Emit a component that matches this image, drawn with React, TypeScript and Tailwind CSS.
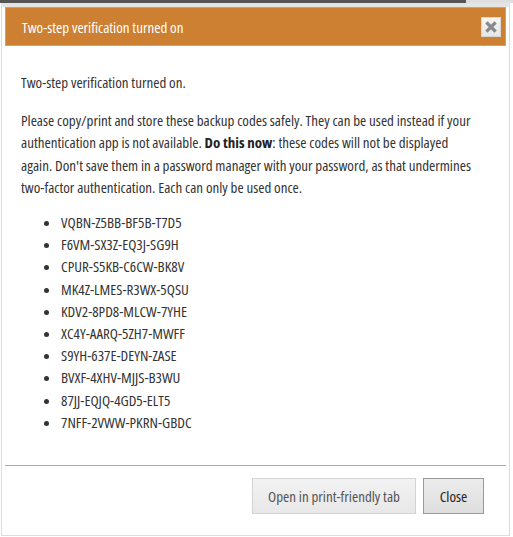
import React from "react";

const codes = [
  "VQBN-Z5BB-BF5B-T7D5",
  "F6VM-SX3Z-EQ3J-SG9H",
  "CPUR-S5KB-C6CW-BK8V",
  "MK4Z-LMES-R3WX-5QSU",
  "KDV2-8PD8-MLCW-7YHE",
  "XC4Y-AARQ-5ZH7-MWFF",
  "S9YH-637E-DEYN-ZASE",
  "BVXF-4XHV-MJJS-B3WU",
  "87JJ-EQJQ-4GD5-ELT5",
  "7NFF-2VWW-PKRN-GBDC",
];

function CloseIcon() {
  return (
    <svg width="12" height="12" viewBox="0 0 12 12">
      <path d="M2.5 2.5 L9.5 9.5 M9.5 2.5 L2.5 9.5" stroke="#8a8a8a" strokeWidth="3.2" strokeLinecap="square" />
    </svg>
  );
}

export default function App() {
  return (
    <div className="h-[537px] w-[513px] overflow-hidden bg-white font-['Open_Sans',sans-serif] font-stretch-[75%]">
      <div className="flex h-[3px]">
        <div className="w-[466px] bg-[#555]" />
        <div className="flex-1 bg-[#dedede]" />
      </div>

      <div className="ml-[1px] flex h-[533px] w-[509px] flex-col border border-t-4 border-[#dcdcdc] border-t-[#e4e4e4] bg-white px-[3px] pb-[3px]">
        <div className="flex h-[39px] items-center justify-between border border-[#a9a9a9] bg-[#cd7f32] pl-4 pr-[3px]">
          <span className="pt-[1px] text-[15px] text-white">Two-step verification turned on</span>
          <button className="mr-[1px] flex h-[20px] w-[20px] items-center justify-center border border-[#d6d6d6] bg-gradient-to-b from-[#f6f6f6] to-[#e6e6e6]">
            <CloseIcon />
          </button>
        </div>

        <div className="flex-1 px-4 pt-[25px] text-[15px] leading-[22.2px] text-[#333]">
          <p>Two-step verification turned on.</p>
          <p className="mt-[16px] max-w-[454px]">
            Please copy/print and store these backup codes safely. They can be used instead if your
            authentication app is not available. <b className="font-bold text-[#222]">Do this now</b>: these
            codes will not be displayed again. Don't save them in a password manager with your password, as
            that undermines two-factor authentication. Each can only be used once.
          </p>
          <ul className="mt-[13px] list-disc pl-10">
            {codes.map((c) => (
              <li key={c}>{c}</li>
            ))}
          </ul>
        </div>

        <div className="flex h-[67px] items-start justify-end gap-[7px] border-t border-[#aaa] pr-[22px] pt-[12px]">
          <button className="h-[36px] w-[164px] whitespace-nowrap border border-[#d3d3d3] bg-gradient-to-b from-[#f2f2f2] to-[#e8e8e8] text-[15px] text-[#555]">
            Open in print-friendly tab
          </button>
          <button className="h-[36px] w-[61px] whitespace-nowrap border border-[#999] bg-gradient-to-b from-[#ececec] to-[#dedede] text-[15px] text-[#222]">
            Close
          </button>
        </div>
      </div>
    </div>
  );
}
